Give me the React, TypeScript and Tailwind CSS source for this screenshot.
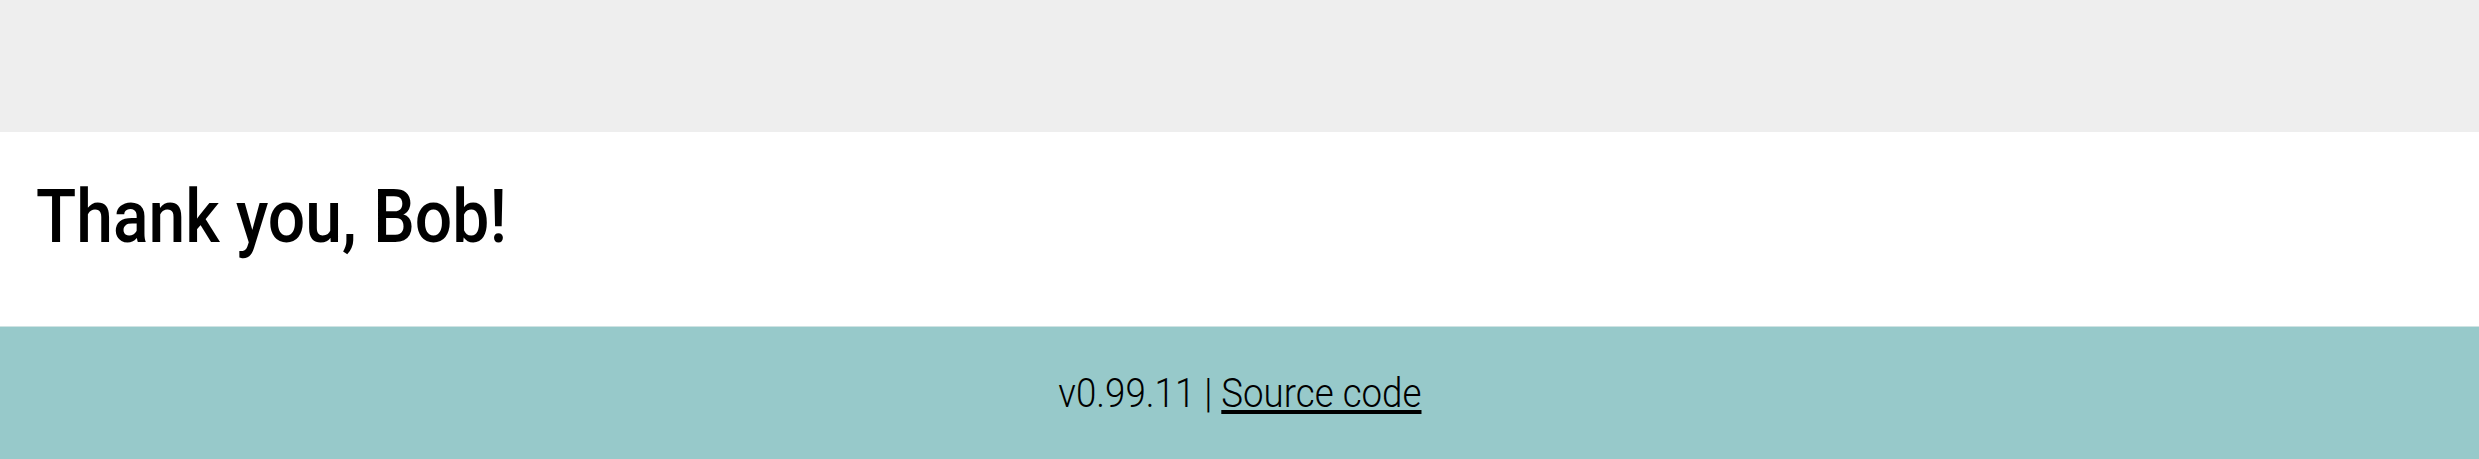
export default function App() {
  return (
    <div className="flex min-h-[459px] flex-col bg-white text-black [font-family:Roboto,'Noto_Sans',sans-serif]">
      <header className="h-[132px] bg-[#eeeeee]" />
      <main className="flex-1 px-[36px] pt-[40px]">
        <h1 className="origin-left scale-x-[0.88] text-[75px] font-medium leading-[normal]">
          Thank you, Bob!
        </h1>
      </main>
      <footer className="flex h-[133px] items-center justify-center border-t border-[#cfe3e3] bg-[#97c9ca] text-[41px] font-light leading-[normal]">
        <span className="scale-x-[0.895]">
          v0.99.11 | <a href="#" className="underline">Source code</a>
        </span>
      </footer>
    </div>
  );
}
